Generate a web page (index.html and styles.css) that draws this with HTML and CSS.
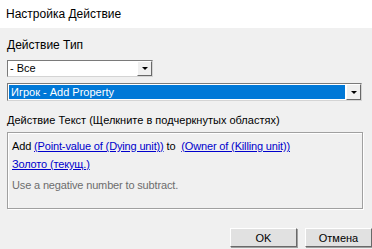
FILE: index.html
```html
<!DOCTYPE html>
<html lang="ru">
<head>
    <meta charset="UTF-8">
    <title>Настройка Действие</title>
    <link rel="stylesheet" href="styles.css">
</head>
<body>
    <div class="titlebar">Настройка Действие</div>
    <div class="dialog">
        <div class="label type-label">Действие Тип</div>
        <div class="combo combo-small">
            <span class="combo-text">- Все</span>
            <span class="combo-arrow"></span>
        </div>
        <div class="combo combo-wide">
            <span class="combo-text selected">Игрок - Add Property</span>
            <span class="combo-arrow"></span>
        </div>
        <div class="label text-label">Действие Текст (Щелкните в подчеркнутых областях)</div>
        <div class="panel">
            <div class="line">Add <a href="#">(Point-value of (Dying unit))</a> to <a href="#">(Owner of (Killing unit))</a></div>
            <div class="line"><a href="#">Золото (текущ.)</a></div>
            <div class="line hint">Use a negative number to subtract.</div>
        </div>
        <div class="buttons">
            <button class="btn">OK</button>
            <button class="btn">Отмена</button>
        </div>
    </div>
</body>
</html>
```

FILE: styles.css
```css
* {
    margin: 0;
    padding: 0;
    box-sizing: border-box;
}

body {
    width: 372px;
    height: 249px;
    overflow: hidden;
    background: #f0f0f0;
    font-family: "Liberation Sans", Arial, sans-serif;
    font-size: 11px;
    color: #000;
}

.titlebar {
    height: 28px;
    line-height: 28px;
    padding-left: 6px;
    background: #fff;
    font-size: 12px;
}

.dialog {
    padding: 0 7px;
}

.label {
    height: 14px;
    line-height: 14px;
}

.type-label {
    margin-top: 10px;
    font-size: 12px;
}

/* combo boxes */
.combo {
    display: flex;
    align-items: stretch;
    background: #fff;
    border: 1px solid #7a7a7a;
    border-right-color: #d4d4d4;
    border-bottom-color: #d4d4d4;
}

.combo-small {
    width: 146px;
    height: 17px;
    margin-top: 8px;
}

.combo-wide {
    width: 355px;
    height: 18px;
    margin-top: 6px;
}

.combo-text {
    flex: 1;
    padding-left: 2px;
    line-height: 15px;
}

.combo-text.selected {
    background: #0078d7;
    color: #fff;
    margin: 1px;
}

.combo-arrow {
    width: 15px;
    background: #f0f0f0;
    border: 1px solid #fff;
    border-right-color: #696969;
    border-bottom-color: #696969;
    display: flex;
    align-items: center;
    justify-content: center;
}

.combo-arrow::after {
    content: "";
    border-left: 3px solid transparent;
    border-right: 3px solid transparent;
    border-top: 3px solid #000;
}

.text-label {
    margin-top: 12px;
}

/* action text */
.panel {
    width: 356px;
    height: 77px;
    margin-top: 5px;
    border: 1px solid #a0a0a0;
    box-shadow: 1px 1px 0 #fff, inset 1px 1px 0 #fff;
    padding: 6px 4px;
}

.line {
    height: 18px;
    line-height: 14px;
    letter-spacing: -0.15px;
}

.line a {
    color: #0000cc;
    margin-left: 3px;
}

.line a:first-child {
    margin-left: 0;
}

.hint {
    color: #6d6d6d;
    margin-top: 3px;
}

/* buttons */
.buttons {
    display: flex;
    justify-content: flex-end;
    gap: 8px;
    margin-top: 19px;
    margin-right: -7px;
}

.btn {
    width: 67px;
    height: 19px;
    font-family: inherit;
    font-size: 11px;
    background: #e1e1e1;
    border: 1px solid #fff;
    border-right-color: #696969;
    border-bottom-color: #696969;
    box-shadow: 1px 1px 0 #a0a0a0;
}
```
